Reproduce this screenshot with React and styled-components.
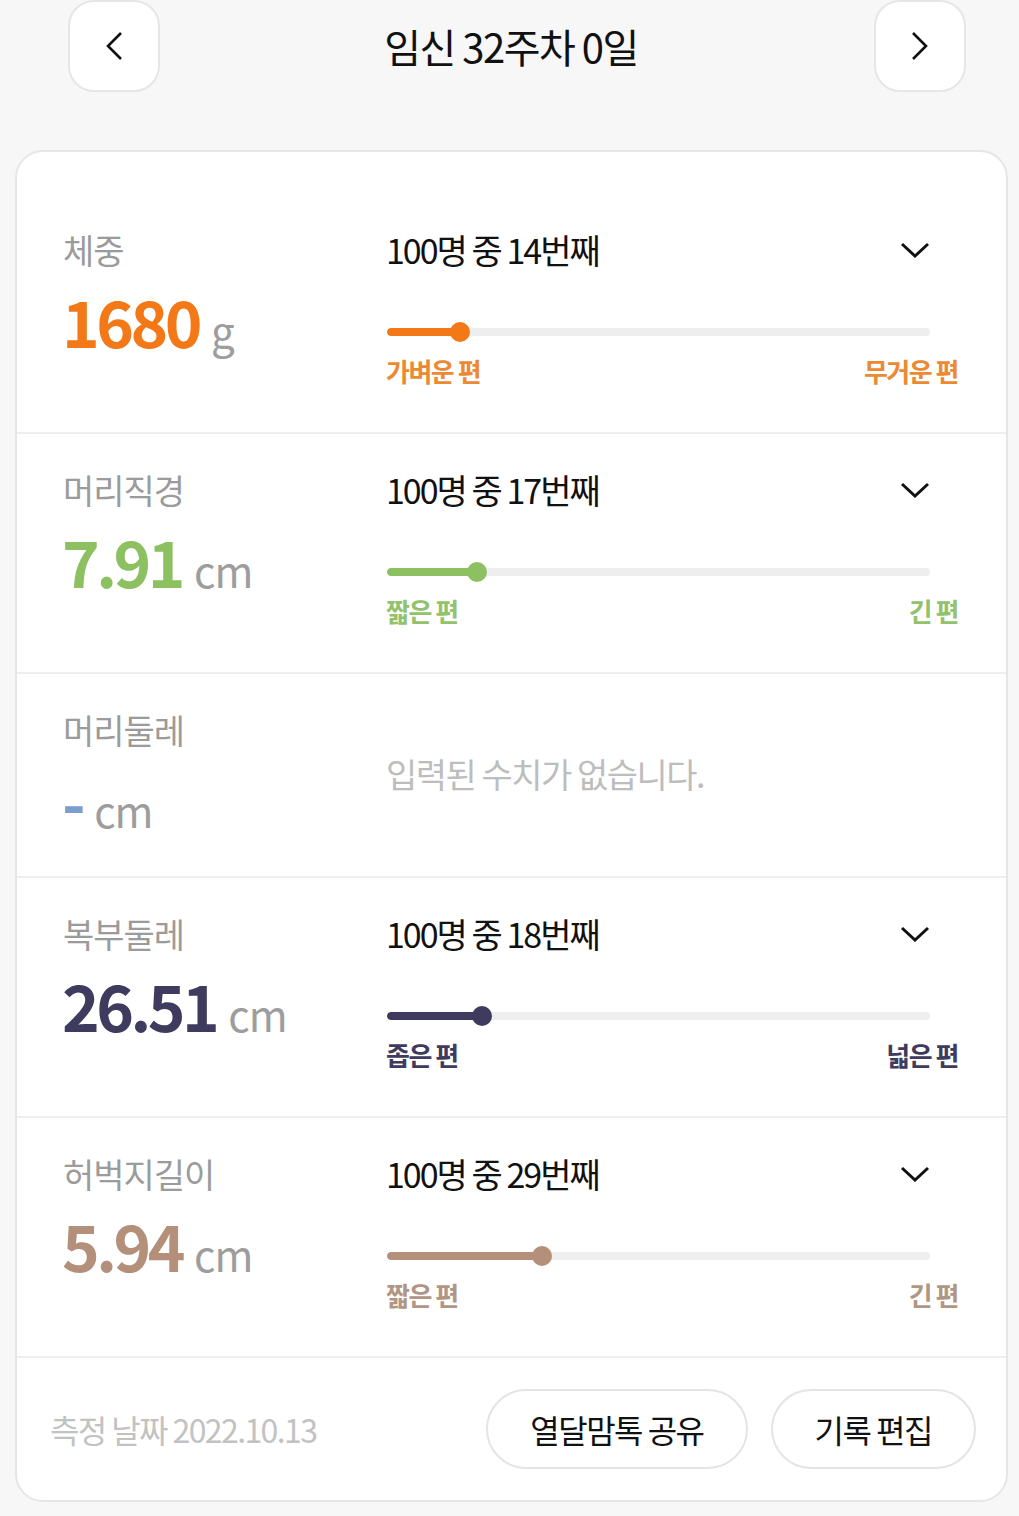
import React from 'react';
import styled, { createGlobalStyle } from 'styled-components';

const GlobalStyle = createGlobalStyle`
  body {
    margin: 0;
    background: #f7f7f7;
    font-family: 'Noto Sans CJK KR', 'Noto Sans', sans-serif;
    color: #111111;
  }
`;

const Page = styled.div`
  width: 1019px;
  min-height: 1516px;
  background: #f7f7f7;
`;

const Header = styled.div`
  display: grid;
  grid-template-columns: 92px 1fr 92px;
  align-items: center;
  padding: 0 53px 0 68px;
  height: 92px;
  margin-bottom: 58px;
`;

const NavButton = styled.button`
  width: 92px;
  height: 92px;
  border: 2px solid #e6e6e6;
  border-radius: 26px;
  background: #ffffff;
  display: flex;
  align-items: center;
  justify-content: center;
  padding: 0;
`;

const Title = styled.h1`
  margin: 0 12px 0 0;
  text-align: center;
  font-size: 40px;
  font-weight: 400;
  letter-spacing: -1.5px;
  line-height: 92px;
`;

const Card = styled.div`
  margin: 0 11px 16px 15px;
  background: #ffffff;
  border: 2px solid #e6e6e6;
  border-radius: 28px;
  padding-top: 42px;
  overflow: hidden;
`;

const Row = styled.div`
  display: grid;
  grid-template-columns: 323px 1fr;
  padding: 36px 48px 45px 46px;
  border-bottom: 2px solid #eeeeee;
`;

const Left = styled.div`
  display: flex;
  flex-direction: column;
`;

const Label = styled.div`
  font-size: 34px;
  line-height: 40px;
  color: #9b9b9b;
  letter-spacing: -1px;
`;

const ValueLine = styled.div`
  display: flex;
  align-items: baseline;
  margin-top: 17px;
  height: 64px;
`;

const Value = styled.span`
  font-size: 64px;
  line-height: 66px;
  font-weight: 700;
  letter-spacing: -3.5px;
  margin-left: -1px;
  color: ${(p) => p.$color};
`;

const Unit = styled.span`
  font-size: 42px;
  line-height: 66px;
  color: #9d9d9d;
  margin-left: 12px;
  letter-spacing: -1px;
`;

const Right = styled.div`
  display: flex;
  flex-direction: column;
`;

const RankLine = styled.div`
  display: flex;
  align-items: center;
  justify-content: space-between;
  padding-right: 28px;
  height: 40px;
`;

const Rank = styled.span`
  font-size: 34px;
  line-height: 40px;
  letter-spacing: -2px;
  color: #111111;
`;

const TrackWrap = styled.div`
  position: relative;
  height: 20px;
  margin: 52px 28px 0 1px;
  display: flex;
  align-items: center;
`;

const Track = styled.div`
  width: 100%;
  height: 8px;
  border-radius: 4px;
  background: #eeeeee;
  overflow: hidden;
`;

const Fill = styled.div`
  height: 100%;
  border-radius: 4px;
  background: ${(p) => p.$color};
`;

const Knob = styled.div`
  position: absolute;
  top: 0;
  width: 20px;
  height: 20px;
  border-radius: 50%;
  transform: translateX(-50%);
  background: ${(p) => p.$color};
`;

const Ends = styled.div`
  display: flex;
  justify-content: space-between;
  margin-top: 13px;
  font-size: 26px;
  line-height: 32px;
  font-weight: 700;
  letter-spacing: -1.5px;
  color: ${(p) => p.$color};
`;

const Empty = styled.div`
  align-self: center;
  font-size: 34px;
  letter-spacing: -1.5px;
  color: #bdbdbd;
  padding-top: 6px;
`;

const Footer = styled.div`
  display: flex;
  align-items: center;
  justify-content: space-between;
  height: 142px;
  padding: 0 30px 0 33px;
`;

const DateText = styled.span`
  font-size: 32px;
  letter-spacing: -1.6px;
  color: #c2c2c2;
`;

const Actions = styled.div`
  display: flex;
  gap: 23px;
`;

const PillButton = styled.button`
  height: 80px;
  padding: 0 42px;
  border: 2px solid #e4e4e4;
  border-radius: 40px;
  background: #ffffff;
  font-family: 'Noto Sans CJK KR', 'Noto Sans', sans-serif;
  font-size: 32px;
  letter-spacing: -1.5px;
  color: #111111;
`;

const Chevron = ({ dir }) =>
  dir === 'left' ? (
    <svg width="18" height="30" viewBox="0 0 18 30">
      <path d="M16 2 L3 15 L16 28" fill="none" stroke="#111" strokeWidth="2.6" />
    </svg>
  ) : (
    <svg width="18" height="30" viewBox="0 0 18 30">
      <path d="M2 2 L15 15 L2 28" fill="none" stroke="#111" strokeWidth="2.6" />
    </svg>
  );

const ChevronDown = () => (
  <svg width="30" height="16" viewBox="0 0 30 16">
    <path d="M2 2 L15 14 L28 2" fill="none" stroke="#111" strokeWidth="3" />
  </svg>
);

const rows = [
  { label: '체중', value: '1680', unit: 'g', rank: 14, color: '#f27818', soft: '#eb8a33', low: '가벼운 편', high: '무거운 편' },
  { label: '머리직경', value: '7.91', unit: 'cm', rank: 17, color: '#8dc061', soft: '#92c26c', low: '짧은 편', high: '긴 편' },
  { label: '머리둘레', value: '-', unit: 'cm', rank: null, color: '#7d9dcc' },
  { label: '복부둘레', value: '26.51', unit: 'cm', rank: 18, color: '#3f3b5f', soft: '#3f3b5f', low: '좁은 편', high: '넓은 편' },
  { label: '허벅지길이', value: '5.94', unit: 'cm', rank: 29, color: '#b4907a', soft: '#b09684', low: '짧은 편', high: '긴 편' },
];

const Measure = ({ row }) => {
  const pct = row.rank ? `${row.rank - 0.5}%` : 0;
  return (
    <Row>
      <Left>
        <Label>{row.label}</Label>
        <ValueLine>
          <Value $color={row.color}>{row.value}</Value>
          <Unit>{row.unit}</Unit>
        </ValueLine>
      </Left>
      {row.rank ? (
        <Right>
          <RankLine>
            <Rank>{`100명 중 ${row.rank}번째`}</Rank>
            <ChevronDown />
          </RankLine>
          <TrackWrap>
            <Track>
              <Fill $color={row.color} style={{ width: pct }} />
            </Track>
            <Knob $color={row.color} style={{ left: pct }} />
          </TrackWrap>
          <Ends $color={row.soft}>
            <span>{row.low}</span>
            <span>{row.high}</span>
          </Ends>
        </Right>
      ) : (
        <Empty>입력된 수치가 없습니다.</Empty>
      )}
    </Row>
  );
};

const App = () => (
  <Page>
    <GlobalStyle />
    <Header>
      <NavButton>
        <Chevron dir="left" />
      </NavButton>
      <Title>임신 32주차 0일</Title>
      <NavButton>
        <Chevron dir="right" />
      </NavButton>
    </Header>
    <Card>
      {rows.map((row) => (
        <Measure key={row.label} row={row} />
      ))}
      <Footer>
        <DateText>측정 날짜 2022.10.13</DateText>
        <Actions>
          <PillButton>열달맘톡 공유</PillButton>
          <PillButton>기록 편집</PillButton>
        </Actions>
      </Footer>
    </Card>
  </Page>
);

export default App;
